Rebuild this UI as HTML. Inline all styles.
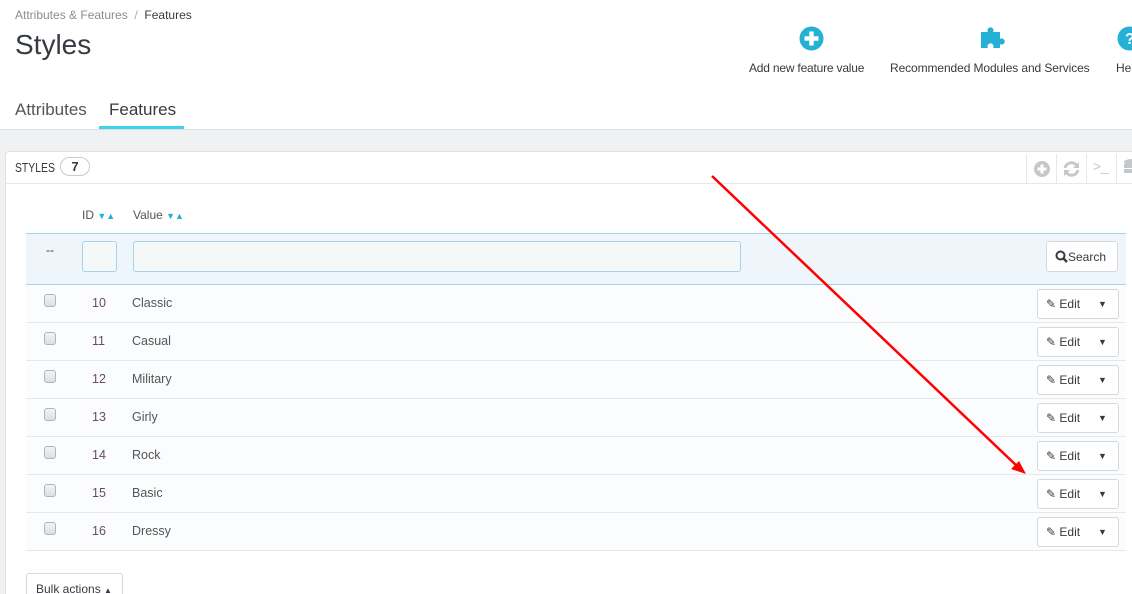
<!DOCTYPE html>
<html><head><style>
*{box-sizing:border-box}
html,body{margin:0;width:1132px;height:594px;overflow:hidden}
body{background:#eff1f2;font-family:"Liberation Sans",sans-serif;color:#363a41;position:relative}
.hdr{position:absolute;left:0;top:0;width:1132px;height:130px;background:#fff;border-bottom:1px solid #dcdfe1}
.abs{position:absolute;white-space:nowrap}
.panel{position:absolute;left:5px;top:151px;width:1140px;height:460px;background:#fff;border:1px solid #dcdfe1;border-radius:4px}
.row{position:absolute;left:26px;width:1100px;height:38px;border-bottom:1px solid #e6e9eb;background:#fbfcfd;font-size:12.5px}
.cb{position:absolute;left:18px;top:9px;width:12px;height:13px;border:1px solid #b0b5ba;border-radius:3px;background:linear-gradient(#f2f3f4,#dcdfe1)}
.id{position:absolute;left:66px;top:11px;color:#6c4c5c}
.val{position:absolute;left:106px;top:11px;color:#555}
.btn{position:absolute;left:1011px;top:4px;width:82px;height:30px;border:1px solid #d5d9dc;border-radius:3px;background:#fff;font-size:12px}
</style></head><body>
<div class="hdr"></div>
<div class="abs" style="left:15px;top:8px;font-size:12px;color:#8a8d92">Attributes &amp; Features <span style="color:#aaa">&nbsp;/&nbsp;</span> <span style="color:#363a41">Features</span></div>
<div class="abs" style="left:15px;top:29px;font-size:28px;color:#363a41">Styles</div>
<div class="abs" style="left:15px;top:100px;font-size:17px;color:#555">Attributes</div>
<div class="abs" style="left:109px;top:100px;font-size:17px;color:#363a41">Features</div>
<div class="abs" style="left:99px;top:126px;width:85px;height:3px;background:#3ed2ee"></div>
<svg class="abs" style="left:799px;top:26px" width="25" height="25"><circle cx="12.5" cy="12.5" r="12" fill="#25b0d6"/><rect x="10.3" y="5.5" width="4.4" height="14" fill="#fff"/><rect x="5.5" y="10.3" width="14" height="4.4" fill="#fff"/></svg>
<div class="abs" style="left:749px;top:61px;font-size:12px;letter-spacing:-0.2px">Add new feature value</div>
<svg class="abs" style="left:980px;top:24px" width="28" height="26"><path d="M1 8h7a3 3 0 1 1 5 0h7v7a3 3 0 1 1 0 5v4h-7a3 3 0 1 0-5 0H1z" fill="#25b0d6"/></svg>
<div class="abs" style="left:890px;top:61px;font-size:12px;letter-spacing:-0.1px">Recommended Modules and Services</div>
<svg class="abs" style="left:1117px;top:26px" width="25" height="25"><circle cx="12.5" cy="12.5" r="12" fill="#25b0d6"/><text x="8" y="18" font-size="16" font-weight="bold" fill="#fff" font-family="Liberation Sans">?</text></svg>
<div class="abs" style="left:1116px;top:61px;font-size:12px">He</div>
<div class="panel"></div>
<div class="abs" style="left:6px;top:183px;width:1126px;height:1px;background:#e6e9eb"></div>
<div class="abs" style="left:15px;top:160px;font-size:13px;transform:scaleX(.8);transform-origin:left">STYLES</div>
<div class="abs" style="left:60px;top:157px;width:30px;height:19px;border:1px solid #c8ccd0;border-radius:10px;text-align:center;font-size:13px;font-weight:bold;line-height:17px">7</div>
<div class="abs" style="left:1026px;top:154px;width:1px;height:29px;background:#e6e9eb"></div>
<div class="abs" style="left:1056px;top:154px;width:1px;height:29px;background:#e6e9eb"></div>
<div class="abs" style="left:1086px;top:154px;width:1px;height:29px;background:#e6e9eb"></div>
<div class="abs" style="left:1116px;top:154px;width:1px;height:29px;background:#e6e9eb"></div>
<svg class="abs" style="left:1034px;top:161px" width="16" height="16"><circle cx="8" cy="8" r="8" fill="#c5c8cb"/><rect x="6.5" y="3.5" width="3" height="9" fill="#fff"/><rect x="3.5" y="6.5" width="9" height="3" fill="#fff"/></svg>
<svg class="abs" style="left:1063px;top:161px" width="17" height="16"><path d="M2 7a6.5 6.5 0 0 1 12-2M15 9a6.5 6.5 0 0 1-12 2" stroke="#c5c8cb" stroke-width="3" fill="none"/><path d="M16 1v6h-6z M1 15v-6h6z" fill="#c5c8cb"/></svg>
<div class="abs" style="left:1093px;top:158px;font-size:14px;color:#c5c8cb">&gt;_</div>
<svg class="abs" style="left:1123px;top:158px" width="12" height="20"><ellipse cx="9" cy="4" rx="8" ry="3" fill="#c5c8cb"/><rect x="1" y="6" width="16" height="4" fill="#c5c8cb"/><rect x="1" y="11" width="16" height="4" fill="#c5c8cb"/></svg>
<div class="abs" style="left:82px;top:208px;font-size:12px;color:#555">ID <span style="color:#25b0d6;font-size:9px">▼▲</span></div>
<div class="abs" style="left:133px;top:208px;font-size:12px;color:#555">Value <span style="color:#25b0d6;font-size:9px">▼▲</span></div>
<div class="abs" style="left:26px;top:233px;width:1100px;height:52px;background:#eef6fb;border-top:1px solid #a5d3ea;border-bottom:1px solid #a5d3ea"></div>
<div class="abs" style="left:46px;top:243px;font-size:12px">--</div>
<div class="abs" style="left:82px;top:241px;width:35px;height:31px;border:1px solid #a5d3ea;border-radius:3px;background:#f5f8f9"></div>
<div class="abs" style="left:133px;top:241px;width:608px;height:31px;border:1px solid #a5d3ea;border-radius:3px;background:#f5f8f9"></div>
<div class="abs" style="left:1046px;top:241px;width:72px;height:31px;border:1px solid #d5d9dc;border-radius:3px;background:#fff;font-size:12px;padding:8px 0 0 8px"><svg width="13" height="13" style="vertical-align:-2px"><circle cx="5.5" cy="5.5" r="4" stroke="#363a41" stroke-width="2" fill="none"/><line x1="8.5" y1="8.5" x2="12" y2="12" stroke="#363a41" stroke-width="2.5"/></svg>Search</div>
<div class="row" style="top:285px"><div class="cb"></div><div class="id">10</div><div class="val">Classic</div><div class="btn"><span class="abs" style="left:8px;top:7px">✎ Edit</span><span class="abs" style="left:60px;top:9px;font-size:9px">▼</span></div></div>
<div class="row" style="top:323px"><div class="cb"></div><div class="id">11</div><div class="val">Casual</div><div class="btn"><span class="abs" style="left:8px;top:7px">✎ Edit</span><span class="abs" style="left:60px;top:9px;font-size:9px">▼</span></div></div>
<div class="row" style="top:361px"><div class="cb"></div><div class="id">12</div><div class="val">Military</div><div class="btn"><span class="abs" style="left:8px;top:7px">✎ Edit</span><span class="abs" style="left:60px;top:9px;font-size:9px">▼</span></div></div>
<div class="row" style="top:399px"><div class="cb"></div><div class="id">13</div><div class="val">Girly</div><div class="btn"><span class="abs" style="left:8px;top:7px">✎ Edit</span><span class="abs" style="left:60px;top:9px;font-size:9px">▼</span></div></div>
<div class="row" style="top:437px"><div class="cb"></div><div class="id">14</div><div class="val">Rock</div><div class="btn"><span class="abs" style="left:8px;top:7px">✎ Edit</span><span class="abs" style="left:60px;top:9px;font-size:9px">▼</span></div></div>
<div class="row" style="top:475px"><div class="cb"></div><div class="id">15</div><div class="val">Basic</div><div class="btn"><span class="abs" style="left:8px;top:7px">✎ Edit</span><span class="abs" style="left:60px;top:9px;font-size:9px">▼</span></div></div>
<div class="row" style="top:513px"><div class="cb"></div><div class="id">16</div><div class="val">Dressy</div><div class="btn"><span class="abs" style="left:8px;top:7px">✎ Edit</span><span class="abs" style="left:60px;top:9px;font-size:9px">▼</span></div></div>
<div class="abs" style="left:26px;top:573px;width:97px;height:30px;border:1px solid #d5d9dc;border-radius:3px;background:#fff;font-size:12px;padding:8px 0 0 9px">Bulk actions <span style="font-size:8px">▲</span></div>
<svg class="abs" style="left:0;top:0" width="1132" height="594"><line x1="712" y1="176" x2="1018" y2="467" stroke="#f00" stroke-width="2.5"/><polygon points="1026,474 1011,469 1019,461" fill="#f00"/></svg>
</body></html>
